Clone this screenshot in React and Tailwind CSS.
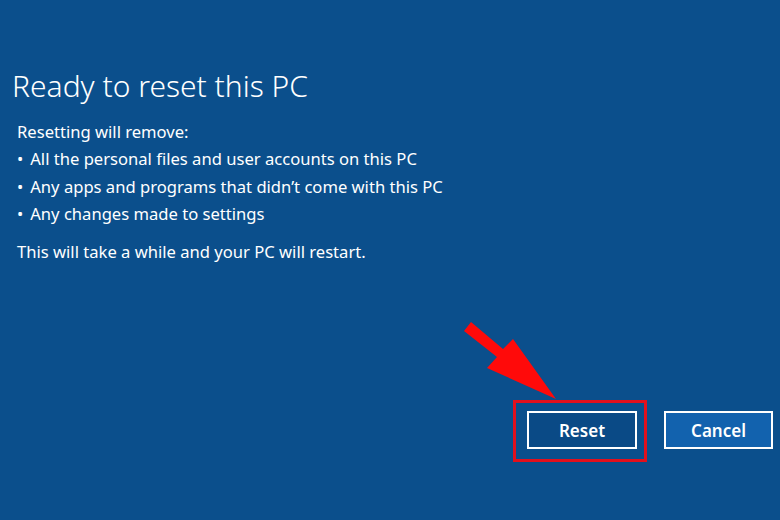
export default function App() {
  return (
    <div
      className="relative w-[780px] h-[520px] bg-[#0b4f8c] text-white flex flex-col overflow-hidden"
      style={{ fontFamily: '"Noto Sans", "Open Sans", sans-serif' }}
    >
      {/* Heading */}
      <h1 className="pl-[12px] pt-[68px] text-[30px] leading-[36px] font-light">
        Ready to reset this PC
      </h1>

      {/* Body */}
      <div className="pl-[17px] pt-[14px] text-[16.6px] leading-[27.3px]">
        <p>Resetting will remove:</p>
        <ul>
          <li className="flex gap-[7px]">
            <span>•</span>All the personal files and user accounts on this PC
          </li>
          <li className="flex gap-[7px]">
            <span>•</span>Any apps and programs that didn’t come with this PC
          </li>
          <li className="flex gap-[7px]">
            <span>•</span>Any changes made to settings
          </li>
        </ul>
        <p className="mt-[11px]">This will take a while and your PC will restart.</p>
      </div>

      {/* Buttons */}
      <div className="mt-auto pb-[71px] pr-[7px] flex justify-end gap-[27px]">
        <button className="w-[110px] h-[38px] border-2 border-white bg-[#0a4a86] text-[17px] font-semibold pt-[2px]">
          Reset
        </button>
        <button className="w-[109px] h-[38px] border-2 border-white bg-[#1262ae] text-[17px] font-semibold pt-[2px]">
          Cancel
        </button>
      </div>

      {/* Red highlight box */}
      <div className="absolute left-[513px] top-[400px] w-[134px] h-[62px] border-[3px] border-[#e3101c]" />

      {/* Red arrow */}
      <svg className="absolute left-0 top-0" width="780" height="520" viewBox="0 0 780 520">
        <polygon
          points="471,322 503,349 513,339 556,399 487,368 497,357 464,331"
          fill="#ff0a0a"
        />
      </svg>
    </div>
  );
}
